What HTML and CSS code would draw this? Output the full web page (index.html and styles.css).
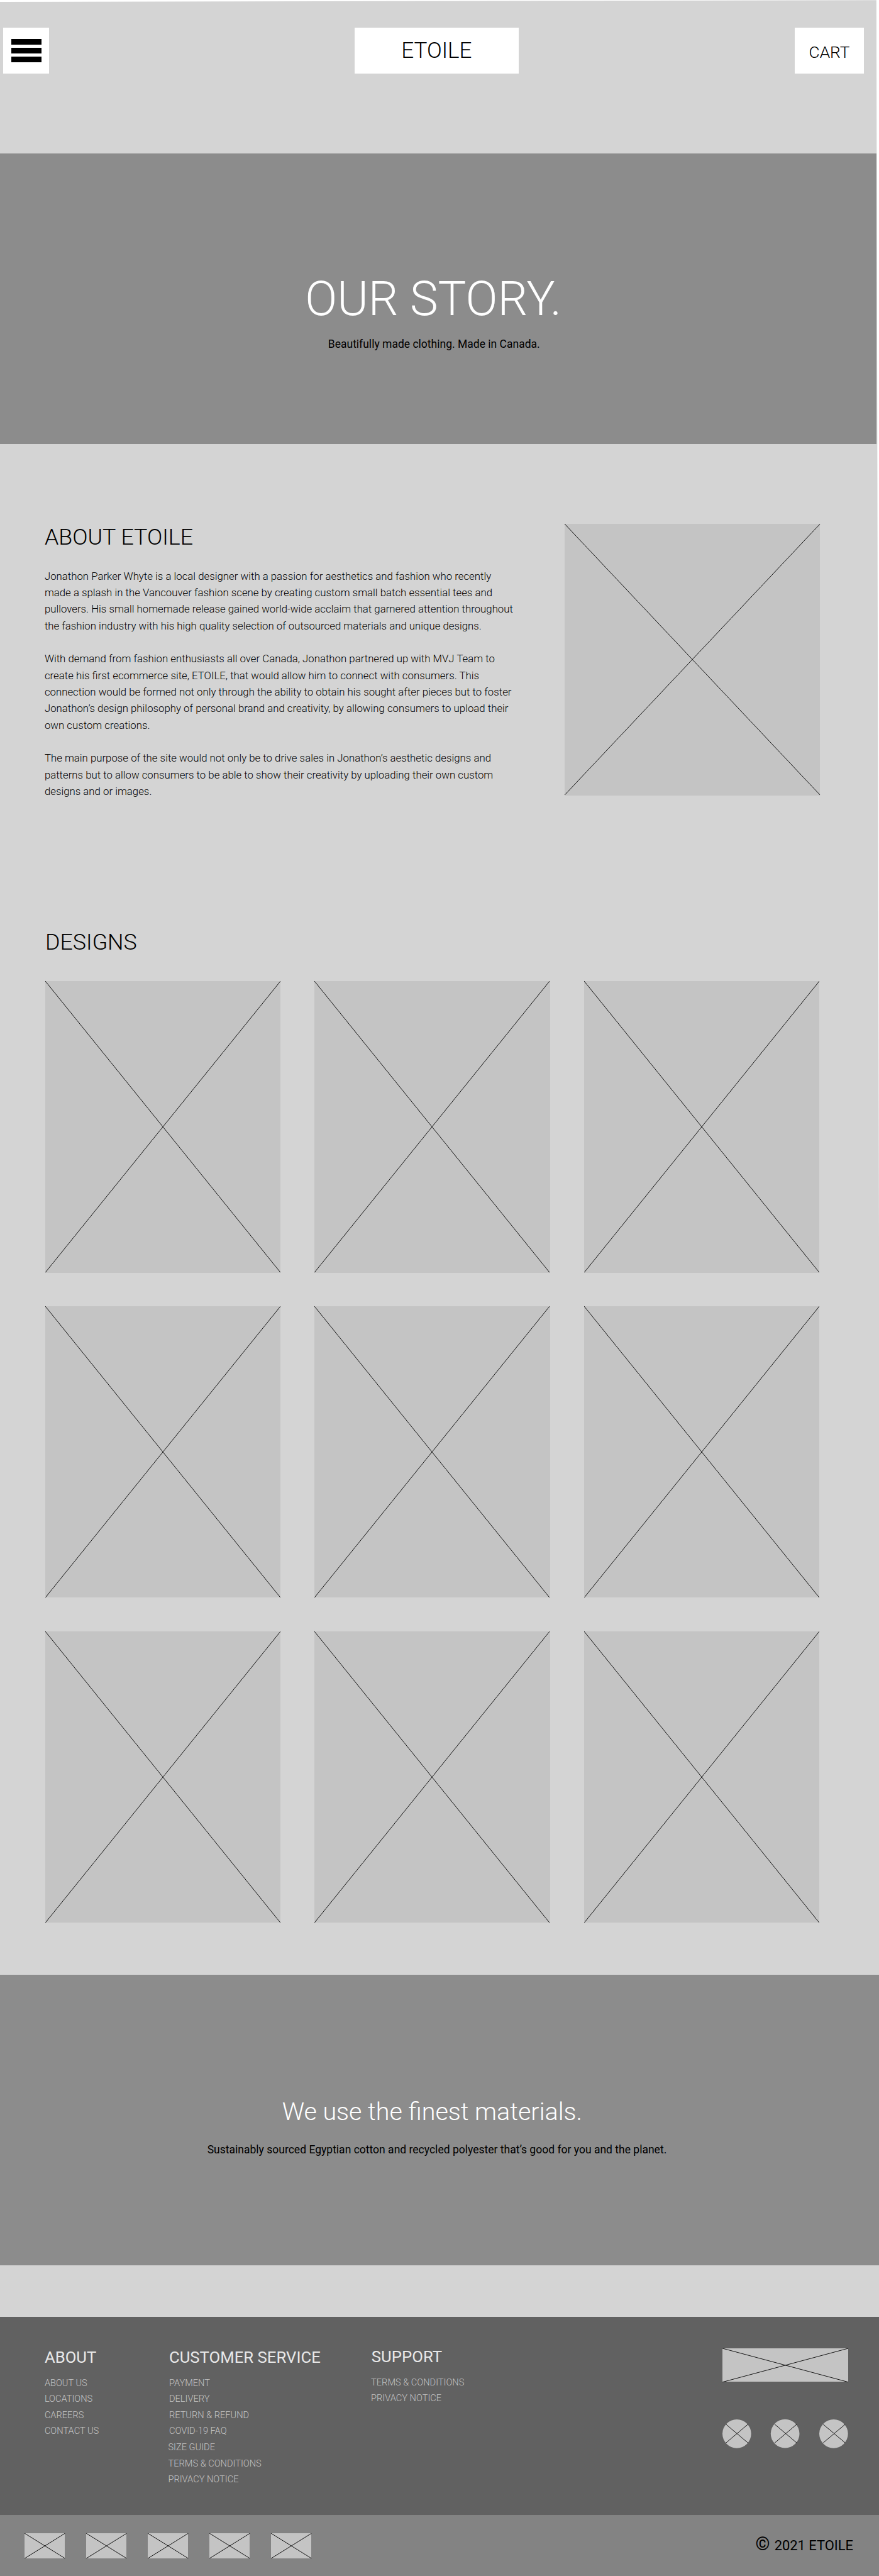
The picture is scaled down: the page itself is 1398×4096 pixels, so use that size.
FILE: index.html
```html
<!DOCTYPE html>
<html lang="en">
<head>
<meta charset="utf-8">
<title>Etoile – Our Story</title>
<link rel="stylesheet" href="styles.css">
</head>
<body>
<svg width="0" height="0" class="defs"><symbol id="cross" viewBox="0 0 100 100" preserveAspectRatio="none"><path d="M0 0L100 100M0 100L100 0" vector-effect="non-scaling-stroke"/></symbol></svg>
<div class="page">
  <svg class="edge" viewBox="0 0 1913 4300" preserveAspectRatio="none"><path d="M0 0H1913V2700L1907.3 0.5L0 4Z"/></svg>
  <header class="header">
    <button class="menu" aria-label="Menu"><span></span><span></span><span></span></button>
    <a class="logo">ETOILE</a>
    <a class="cart">CART</a>
  </header>
  <section class="band hero">
    <h1>OUR STORY.</h1>
    <p>Beautifully made clothing. Made in Canada.</p>
  </section>
  <main>
    <section class="about">
      <div class="copy">
        <h2>ABOUT ETOILE</h2>
        <p>Jonathon Parker Whyte is a local designer with a passion for aesthetics and fashion who recently<br>made a splash in the Vancouver fashion scene by creating custom small batch essential tees and<br>pullovers. His small homemade release gained world-wide acclaim that garnered attention throughout<br>the fashion industry with his high quality selection of outsourced materials and unique designs.</p>
        <p>With demand from fashion enthusiasts all over Canada, Jonathon partnered up with MVJ Team to<br>create his first ecommerce site, ETOILE, that would allow him to connect with consumers. This<br>connection would be formed not only through the ability to obtain his sought after pieces but to foster<br>Jonathon’s design philosophy of personal brand and creativity, by allowing consumers to upload their<br>own custom creations.</p>
        <p>The main purpose of the site would not only be to drive sales in Jonathon’s aesthetic designs and<br>patterns but to allow consumers to be able to show their creativity by uploading their own custom<br>designs and or images.</p>
      </div>
      <svg class="ph portrait"><use href="#cross"/></svg>
    </section>
    <section class="designs">
      <h2>DESIGNS</h2>
      <div class="grid">
        <svg class="ph"><use href="#cross"/></svg>
        <svg class="ph"><use href="#cross"/></svg>
        <svg class="ph"><use href="#cross"/></svg>
        <svg class="ph"><use href="#cross"/></svg>
        <svg class="ph"><use href="#cross"/></svg>
        <svg class="ph"><use href="#cross"/></svg>
        <svg class="ph"><use href="#cross"/></svg>
        <svg class="ph"><use href="#cross"/></svg>
        <svg class="ph"><use href="#cross"/></svg>
      </div>
    </section>
  </main>
  <section class="band materials">
    <h2>We use the finest materials.</h2>
    <p>Sustainably sourced Egyptian cotton and recycled polyester that’s good for you and the planet.</p>
  </section>
  <footer>
    <div class="links">
      <nav class="col-about">
        <h3>ABOUT</h3>
        <a>ABOUT US</a><a>LOCATIONS</a><a>CAREERS</a><a>CONTACT US</a>
      </nav>
      <nav class="col-service">
        <h3>CUSTOMER SERVICE</h3>
        <a>PAYMENT</a><a>DELIVERY</a><a>RETURN &amp; REFUND</a><a>COVID-19 FAQ</a><a class="out">SIZE GUIDE</a><a class="out">TERMS &amp; CONDITIONS</a><a class="out">PRIVACY NOTICE</a>
      </nav>
      <nav class="col-support">
        <h3>SUPPORT</h3>
        <a>TERMS &amp; CONDITIONS</a><a>PRIVACY NOTICE</a>
      </nav>
      <div class="brand">
        <svg class="ph wide"><use href="#cross"/></svg>
        <div class="social">
          <svg viewBox="0 0 62.5 62.5"><circle cx="31.25" cy="31.25" r="31.25"/><path d="M7.7 10.7L55.5 51M7.7 51L55.5 10.7"/></svg>
          <svg viewBox="0 0 62.5 62.5"><circle cx="31" cy="31" r="31.25"/><path d="M8.5 10.7L56.3 51M8.5 51L56.3 10.7"/></svg>
          <svg viewBox="0 0 62.5 62.5"><circle cx="31.25" cy="31.25" r="31.25"/><path d="M8.5 10.7L56.3 51M8.5 51L56.3 10.7"/></svg>
        </div>
      </div>
    </div>
    <div class="bottom">
      <div class="pay">
        <svg class="ph"><use href="#cross"/></svg>
        <svg class="ph"><use href="#cross"/></svg>
        <svg class="ph"><use href="#cross"/></svg>
        <svg class="ph"><use href="#cross"/></svg>
        <svg class="ph"><use href="#cross"/></svg>
      </div>
      <p class="copyright"><span>©</span>2021 ETOILE</p>
    </div>
  </footer>
</div>
</body>
</html>
```
FILE: styles.css
```css
/* 1rem is 1/191.3 of the window width, so the layout scales with it */
html { font-size: calc(100vw / 191.3); }
* { box-sizing: border-box; margin: 0; padding: 0; }
body { font-family: Roboto, "Liberation Sans", sans-serif; font-weight: 300; background: #838383; color: #000; overflow-x: hidden; }
h1, h2, h3 { font-weight: 300; white-space: nowrap; }
p, a { white-space: nowrap; }
.defs { position: absolute; }
.page { position: relative; min-height: 100vh; background: #d4d4d4; display: flex; flex-direction: column; }
.edge { position: absolute; left: 0; top: 0; width: 100%; height: 430rem; fill: #fff; }

.header { display: flex; height: 33.42rem; padding: 6rem 0 0 .73rem; }
.header > * { height: 10rem; background: #fff; display: flex; align-items: center; justify-content: center; }
.menu { width: 10.01rem; border: 0; flex-direction: column; gap: .7rem; }
.menu span { width: 6.6rem; height: 1.2rem; background: #000; }
.logo { width: 35.65rem; margin-left: 66.46rem; font-size: 4.8rem; }
.cart { width: 15rem; margin-left: 60.15rem; font-size: 3.6rem; padding-top: .7rem; }

.band { background: #8c8c8c; height: 63.22rem; text-align: center; color: #fff; }
.band p { font-size: 2.4rem; line-height: 2.8rem; font-weight: 400; color: #000; }
.hero { padding-top: 25.6rem; width: 190.7rem; }
.hero h1 { font-size: 10.3rem; line-height: 12.2rem; padding-right: 2.1rem; }
.hero p { margin-top: 2.25rem; padding-right: 1.8rem; }
.materials { padding-top: 26.75rem; }
.materials h2 { font-size: 5.4rem; line-height: 6.4rem; padding-right: 3.2rem; }
.materials p { margin-top: 3.6rem; padding-right: 1.1rem; }

.ph { display: block; background: #c4c4c4; overflow: visible; stroke: #000; stroke-width: .9px; fill: none; }
main h2 { font-size: 4.9rem; line-height: 5.6rem; }
.about { display: flex; justify-content: space-between; height: 76.4rem; padding: 17.4rem 12.85rem 0 9.7rem; }
.copy h2 { padding-top: .12rem; }
.copy p { font-size: 2.3rem; line-height: 3.6rem; margin-top: 3.6rem; }
.copy h2 + p { margin-top: 3.78rem; }
.portrait { width: 55.6rem; height: 59rem; }
.designs { padding: 29.15rem 0 11.3rem 9.86rem; }
.grid { display: grid; grid-template-columns: repeat(3, 51.2rem); grid-auto-rows: 63.42rem; gap: 7.3rem 7.42rem; margin-top: 5.7rem; }
.grid .ph { width: 100%; height: 100%; }

footer { margin-top: 11.22rem; flex: 1; display: flex; flex-direction: column; }
.links { height: 43.15rem; background: #616161; display: flex; padding: 6.75rem 6.7rem 0 9.7rem; }
nav h3 { font-size: 3.52rem; line-height: 4.2rem; font-weight: 400; color: #e8e8e8; margin-bottom: 1.75rem; }
nav a { display: block; font-size: 2rem; line-height: 3.51rem; color: #c4c4c4; }
.col-about { width: 27.1rem; }
.col-service { width: 43.95rem; }
.col-service .out { margin-left: -.2rem; }
.col-support { margin-top: -.12rem; }
.col-support h3 { padding-left: .1rem; }
.brand { margin-left: auto; width: 27.4rem; }
.wide { width: 27.4rem; height: 7.35rem; margin-top: .1rem; }
.social { display: flex; justify-content: space-between; margin-top: 8.15rem; }
.social svg { width: 6.25rem; height: 6.25rem; overflow: visible; fill: #c4c4c4; }
.social path { stroke: #000; stroke-width: 1.2px; }
.bottom { flex: 1; background: #838383; display: flex; justify-content: space-between; padding: 3.9rem 5.6rem 0 5.3rem; }
.pay { display: flex; gap: 4.56rem; }
.pay .ph { width: 8.85rem; height: 5.5rem; }
.copyright { font-size: 3rem; line-height: 5.5rem; font-weight: 400; }
.copyright span { font-size: 4rem; margin-right: 1rem; line-height: 1; }
```
